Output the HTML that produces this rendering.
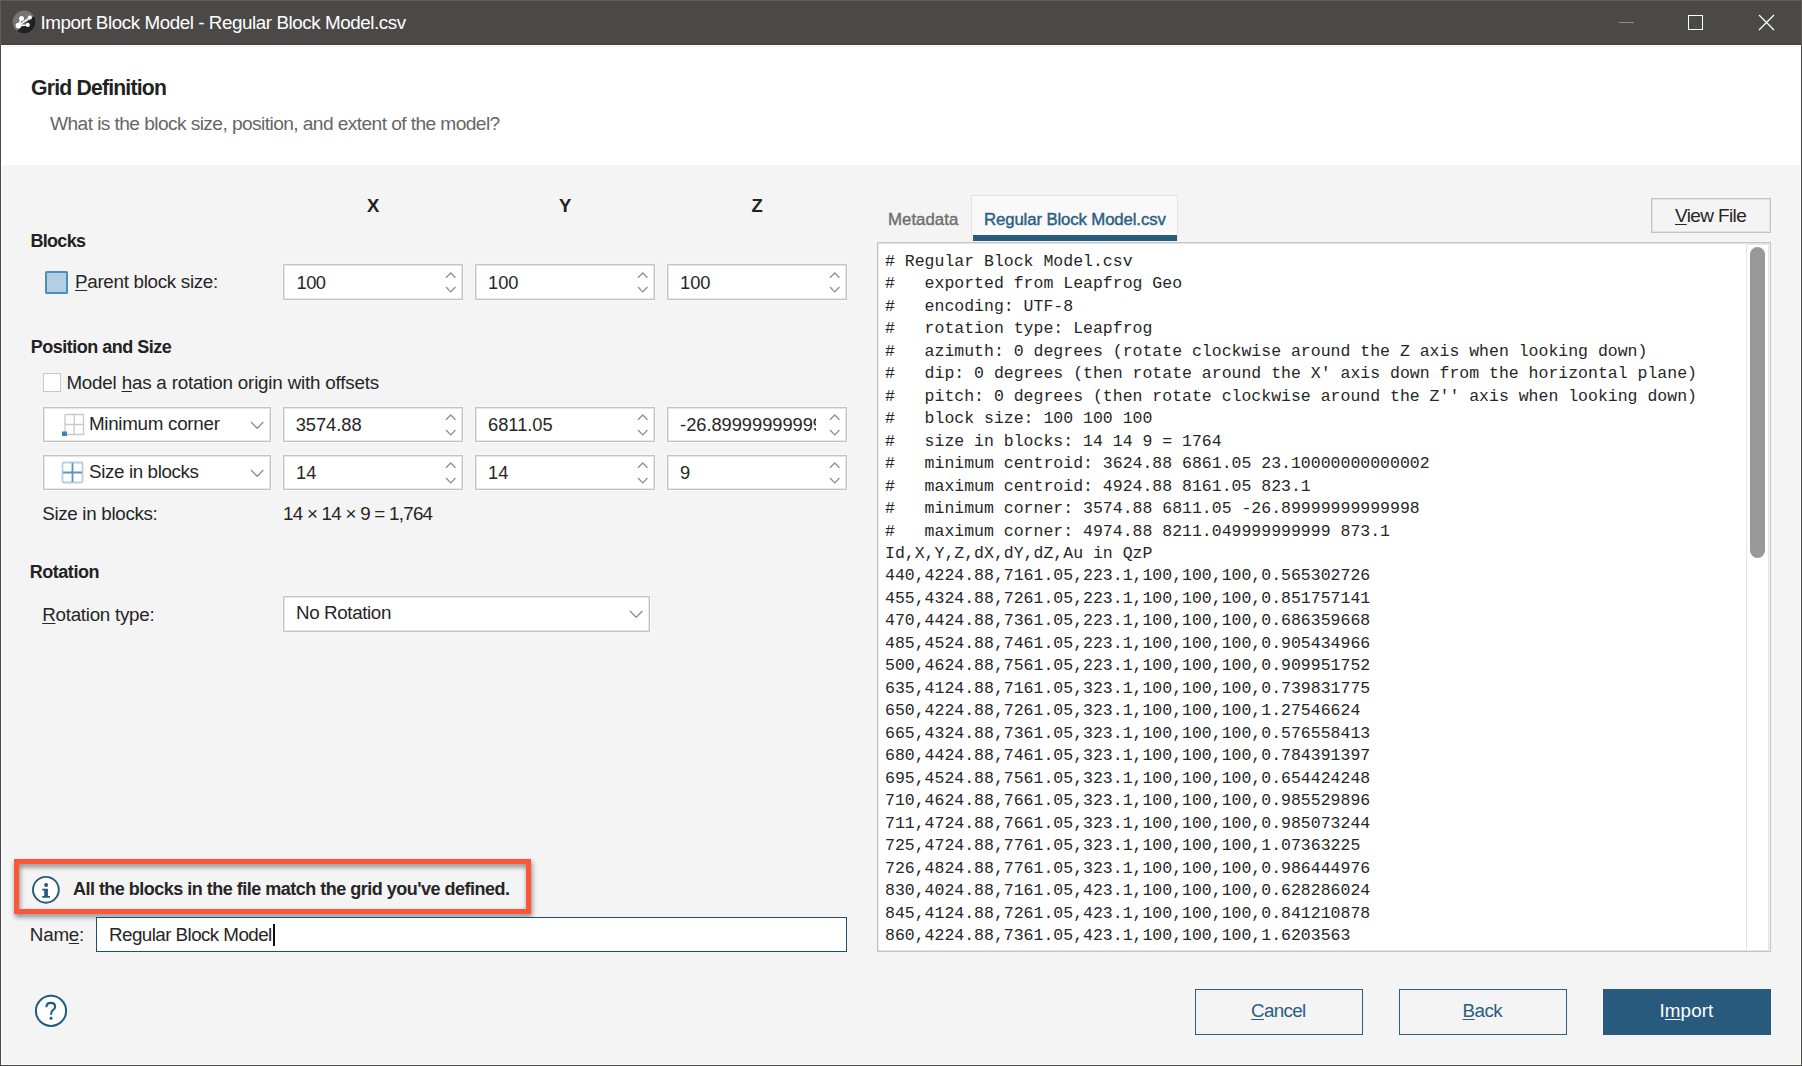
<!DOCTYPE html>
<html><head><meta charset="utf-8"><title>Import Block Model</title><style>*{margin:0;padding:0}
html,body{width:1802px;height:1066px;overflow:hidden;background:#4b4947}
body>div,body>svg{position:absolute}
.t{white-space:pre}
u{text-decoration:underline;text-underline-offset:1.5px;text-decoration-thickness:1px}
</style></head>
<body>
<div style="left:0px;top:0px;width:1802px;height:1066px;background:#4b4947"></div>
<div style="left:0px;top:0px;width:1802px;height:1px;background:#5f5d5b"></div>
<div style="left:0px;top:0px;width:1px;height:45px;background:#5f5d5b"></div>
<div style="left:1801px;top:0px;width:1px;height:45px;background:#5f5d5b"></div>
<svg style="left:12px;top:10px" width="25" height="25" viewBox="0 0 25 25">
<defs><clipPath id="ic"><circle cx="12.1" cy="12.0" r="11.4"/></clipPath></defs>
<circle cx="12.1" cy="12.0" r="11.4" fill="#767474"/>
<path d="M0 26 L6 19.9 L21.3 6.4 L26 1 L26 26 Z" fill="#202125" clip-path="url(#ic)"/>
<line x1="6.45" y1="15.6" x2="17.86" y2="7.58" stroke="#fff" stroke-width="1.5"/>
<line x1="6.45" y1="15.6" x2="9.55" y2="8.4" stroke="#fff" stroke-width="1.5"/>
<line x1="6.45" y1="15.6" x2="15.75" y2="14.9" stroke="#fff" stroke-width="1.5"/>
<circle cx="6.45" cy="15.6" r="2.8" fill="#fff"/>
<circle cx="9.55" cy="8.4" r="2.5" fill="#fff"/>
<circle cx="17.86" cy="7.58" r="2.1" fill="#fff"/>
<circle cx="15.75" cy="14.9" r="2.1" fill="#fff"/>
</svg>
<div id="title" class="t" style="left:40.4px;top:14.18px;font-size:18.8px;line-height:18.8px;color:#ffffff;font-weight:normal;font-family:'Liberation Sans', sans-serif;letter-spacing:-0.428px;">Import Block Model - Regular Block Model.csv</div>
<div style="left:1619px;top:22px;width:15px;height:1px;background:#8f8e8d"></div>
<div style="left:1688px;top:15px;width:15px;height:15px;border:1.4px solid #fff;box-sizing:border-box"></div>
<svg style="left:1758px;top:14px" width="17" height="17"><path d="M1 1 L16 16 M16 1 L1 16" stroke="#fff" stroke-width="1.3"/></svg>
<div style="left:1px;top:45px;width:1800px;height:1020px;background:#ffffff"></div>
<div style="left:1px;top:44px;width:1800px;height:1px;background:#3f3e3c"></div>
<div style="left:2px;top:46px;width:1798px;height:1px;background:#eeeeee"></div>
<div id="hdr" class="t" style="left:31.099999999999998px;top:77.05px;font-size:21.2px;line-height:21.2px;color:#222222;font-weight:bold;font-family:'Liberation Sans', sans-serif;letter-spacing:-0.814px;">Grid Definition</div>
<div id="sub" class="t" style="left:50.0px;top:113.64px;font-size:19.2px;line-height:19.2px;color:#666666;font-weight:normal;font-family:'Liberation Sans', sans-serif;letter-spacing:-0.596px;">What is the block size, position, and extent of the model?</div>
<div style="left:2px;top:165px;width:1798px;height:899px;background:#f4f4f4"></div>
<div id="axX" class="t" style="left:367.0px;top:197.34px;font-size:18.5px;line-height:18.5px;color:#222222;font-weight:bold;font-family:'Liberation Sans', sans-serif;letter-spacing:0.000px;">X</div>
<div id="axY" class="t" style="left:559.0px;top:197.34px;font-size:18.5px;line-height:18.5px;color:#222222;font-weight:bold;font-family:'Liberation Sans', sans-serif;letter-spacing:0.000px;">Y</div>
<div id="axZ" class="t" style="left:751.5px;top:197.34px;font-size:18.5px;line-height:18.5px;color:#222222;font-weight:bold;font-family:'Liberation Sans', sans-serif;letter-spacing:0.000px;">Z</div>
<div id="blocks" class="t" style="left:30.5px;top:231.76px;font-size:18px;line-height:18px;color:#222222;font-weight:bold;font-family:'Liberation Sans', sans-serif;letter-spacing:-0.720px;">Blocks</div>
<div style="left:45px;top:271px;width:23px;height:23px;background:#b2cfe3;border:2px solid #4c8fbf;border-radius:1.5px;box-sizing:border-box"></div>
<div id="pbs" class="t" style="left:75.0px;top:273.08px;font-size:18.8px;line-height:18.8px;color:#262626;font-weight:normal;font-family:'Liberation Sans', sans-serif;letter-spacing:-0.295px;"><u>P</u>arent block size:</div>
<div style="left:283px;top:264px;width:180px;height:36px;background:#fff;border:1px solid #c4c4c4;box-shadow:inset 0 0 0 1px #e6e6e6,0 0 0 1px rgba(255,255,255,0.4);box-sizing:border-box"></div>
<div id="s10" class="t" style="left:296.5px;top:273.51px;font-size:18.3px;line-height:18.3px;color:#262626;font-weight:normal;font-family:'Liberation Sans', sans-serif;letter-spacing:-0.500px;">100</div>
<svg style="left:444.75px;top:271.65px" width="11.5" height="6.7"><path d="M1 5.7 L5.75 1 L10.5 5.7" fill="none" stroke="#8c8c8c" stroke-width="1.3"/></svg>
<svg style="left:444.75px;top:286.15000000000003px" width="11.5" height="6.9"><path d="M1 1 L5.75 5.9 L10.5 1" fill="none" stroke="#8c8c8c" stroke-width="1.3"/></svg>
<div style="left:475px;top:264px;width:180px;height:36px;background:#fff;border:1px solid #c4c4c4;box-shadow:inset 0 0 0 1px #e6e6e6,0 0 0 1px rgba(255,255,255,0.4);box-sizing:border-box"></div>
<div id="t10" class="t" style="left:488.1px;top:273.51px;font-size:18.3px;line-height:18.3px;color:#262626;font-weight:normal;font-family:'Liberation Sans', sans-serif;letter-spacing:0.000px;letter-spacing:-0.033px;">100</div>
<svg style="left:636.75px;top:271.65px" width="11.5" height="6.7"><path d="M1 5.7 L5.75 1 L10.5 5.7" fill="none" stroke="#8c8c8c" stroke-width="1.3"/></svg>
<svg style="left:636.75px;top:286.15000000000003px" width="11.5" height="6.9"><path d="M1 1 L5.75 5.9 L10.5 1" fill="none" stroke="#8c8c8c" stroke-width="1.3"/></svg>
<div style="left:667px;top:264px;width:180px;height:36px;background:#fff;border:1px solid #c4c4c4;box-shadow:inset 0 0 0 1px #e6e6e6,0 0 0 1px rgba(255,255,255,0.4);box-sizing:border-box"></div>
<div id="t11" class="t" style="left:680.1px;top:273.51px;font-size:18.3px;line-height:18.3px;color:#262626;font-weight:normal;font-family:'Liberation Sans', sans-serif;letter-spacing:0.000px;letter-spacing:-0.033px;">100</div>
<svg style="left:828.75px;top:271.65px" width="11.5" height="6.7"><path d="M1 5.7 L5.75 1 L10.5 5.7" fill="none" stroke="#8c8c8c" stroke-width="1.3"/></svg>
<svg style="left:828.75px;top:286.15000000000003px" width="11.5" height="6.9"><path d="M1 1 L5.75 5.9 L10.5 1" fill="none" stroke="#8c8c8c" stroke-width="1.3"/></svg>
<div id="pas" class="t" style="left:30.8px;top:337.76px;font-size:18px;line-height:18px;color:#222222;font-weight:bold;font-family:'Liberation Sans', sans-serif;letter-spacing:-0.500px;">Position and Size</div>
<div style="left:43px;top:373px;width:18px;height:19px;background:#fff;border:1.7px solid #c8c8c8;box-sizing:border-box"></div>
<div id="model" class="t" style="left:66.39999999999999px;top:374.08px;font-size:18.8px;line-height:18.8px;color:#262626;font-weight:normal;font-family:'Liberation Sans', sans-serif;letter-spacing:-0.190px;">Model <u>h</u>as a rotation origin with offsets</div>
<div style="left:43px;top:407px;width:228px;height:35px;background:#fff;border:1px solid #c4c4c4;box-shadow:inset 0 0 0 1px #e6e6e6,0 0 0 1px rgba(255,255,255,0.4);box-sizing:border-box"></div>
<svg style="left:249.8px;top:420.55px" width="14.4" height="8.3"><path d="M1 1 L7.2 7.3 L13.4 1" fill="none" stroke="#8c8c8c" stroke-width="1.3"/></svg>
<svg style="left:61px;top:412px" width="24" height="24" viewBox="0 0 24 24">
<path d="M4 2.5 H22.5 V22.5 H4 M4 12.5 H22.5 M13.2 2.5 V22.5 M4 2.5 V20" fill="none" stroke="#c9c9c9" stroke-width="1.3"/>
<rect x="1" y="19.5" width="5" height="4.5" fill="#3b84bd"/>
</svg>
<div id="mc" class="t" style="left:88.89999999999999px;top:414.58px;font-size:18.8px;line-height:18.8px;color:#262626;font-weight:normal;font-family:'Liberation Sans', sans-serif;letter-spacing:-0.277px;">Minimum corner</div>
<div style="left:283px;top:407px;width:180px;height:35px;background:#fff;border:1px solid #c4c4c4;box-shadow:inset 0 0 0 1px #e6e6e6,0 0 0 1px rgba(255,255,255,0.4);box-sizing:border-box"></div>
<div id="s20" class="t" style="left:295.7px;top:415.51px;font-size:18.3px;line-height:18.3px;color:#262626;font-weight:normal;font-family:'Liberation Sans', sans-serif;letter-spacing:-0.033px;">3574.88</div>
<svg style="left:444.75px;top:414.15px" width="11.5" height="6.7"><path d="M1 5.7 L5.75 1 L10.5 5.7" fill="none" stroke="#8c8c8c" stroke-width="1.3"/></svg>
<svg style="left:444.75px;top:428.65000000000003px" width="11.5" height="6.9"><path d="M1 1 L5.75 5.9 L10.5 1" fill="none" stroke="#8c8c8c" stroke-width="1.3"/></svg>
<div style="left:475px;top:407px;width:180px;height:35px;background:#fff;border:1px solid #c4c4c4;box-shadow:inset 0 0 0 1px #e6e6e6,0 0 0 1px rgba(255,255,255,0.4);box-sizing:border-box"></div>
<div id="t16" class="t" style="left:488.1px;top:415.51px;font-size:18.3px;line-height:18.3px;color:#262626;font-weight:normal;font-family:'Liberation Sans', sans-serif;letter-spacing:0.000px;letter-spacing:-0.033px;">6811.05</div>
<svg style="left:636.75px;top:414.15px" width="11.5" height="6.7"><path d="M1 5.7 L5.75 1 L10.5 5.7" fill="none" stroke="#8c8c8c" stroke-width="1.3"/></svg>
<svg style="left:636.75px;top:428.65000000000003px" width="11.5" height="6.9"><path d="M1 1 L5.75 5.9 L10.5 1" fill="none" stroke="#8c8c8c" stroke-width="1.3"/></svg>
<div style="left:667px;top:407px;width:180px;height:35px;background:#fff;border:1px solid #c4c4c4;box-shadow:inset 0 0 0 1px #e6e6e6,0 0 0 1px rgba(255,255,255,0.4);box-sizing:border-box"></div>
<div id="t17" class="t" style="left:680.1px;top:415.51px;font-size:18.3px;line-height:18.3px;color:#262626;font-weight:normal;font-family:'Liberation Sans', sans-serif;letter-spacing:0.000px;overflow:hidden;width:136.2px;letter-spacing:-0.033px;">-26.89999999999</div>
<svg style="left:828.75px;top:414.15px" width="11.5" height="6.7"><path d="M1 5.7 L5.75 1 L10.5 5.7" fill="none" stroke="#8c8c8c" stroke-width="1.3"/></svg>
<svg style="left:828.75px;top:428.65000000000003px" width="11.5" height="6.9"><path d="M1 1 L5.75 5.9 L10.5 1" fill="none" stroke="#8c8c8c" stroke-width="1.3"/></svg>
<div style="left:43px;top:455px;width:228px;height:35px;background:#fff;border:1px solid #c4c4c4;box-shadow:inset 0 0 0 1px #e6e6e6,0 0 0 1px rgba(255,255,255,0.4);box-sizing:border-box"></div>
<svg style="left:249.8px;top:468.55px" width="14.4" height="8.3"><path d="M1 1 L7.2 7.3 L13.4 1" fill="none" stroke="#8c8c8c" stroke-width="1.3"/></svg>
<svg style="left:61px;top:461px" width="24" height="24" viewBox="0 0 24 24">
<rect x="1.5" y="1.5" width="20" height="20" rx="1.5" fill="none" stroke="#b9cddc" stroke-width="1.8"/>
<path d="M11.5 2 V21 M2 11.5 H21" stroke="#5d95c0" stroke-width="1.8"/>
<path d="M3 3 H20 V20 H3 Z" fill="none" stroke="#5d95c0" stroke-width="0"/>
</svg>
<div id="sib" class="t" style="left:89.1px;top:462.58px;font-size:18.8px;line-height:18.8px;color:#262626;font-weight:normal;font-family:'Liberation Sans', sans-serif;letter-spacing:-0.385px;">Size in blocks</div>
<div style="left:283px;top:455px;width:180px;height:35px;background:#fff;border:1px solid #c4c4c4;box-shadow:inset 0 0 0 1px #e6e6e6,0 0 0 1px rgba(255,255,255,0.4);box-sizing:border-box"></div>
<div id="s30" class="t" style="left:296.1px;top:463.51px;font-size:18.3px;line-height:18.3px;color:#262626;font-weight:normal;font-family:'Liberation Sans', sans-serif;letter-spacing:0.000px;">14</div>
<svg style="left:444.75px;top:462.15px" width="11.5" height="6.7"><path d="M1 5.7 L5.75 1 L10.5 5.7" fill="none" stroke="#8c8c8c" stroke-width="1.3"/></svg>
<svg style="left:444.75px;top:476.65000000000003px" width="11.5" height="6.9"><path d="M1 1 L5.75 5.9 L10.5 1" fill="none" stroke="#8c8c8c" stroke-width="1.3"/></svg>
<div style="left:475px;top:455px;width:180px;height:35px;background:#fff;border:1px solid #c4c4c4;box-shadow:inset 0 0 0 1px #e6e6e6,0 0 0 1px rgba(255,255,255,0.4);box-sizing:border-box"></div>
<div id="t20" class="t" style="left:488.1px;top:463.51px;font-size:18.3px;line-height:18.3px;color:#262626;font-weight:normal;font-family:'Liberation Sans', sans-serif;letter-spacing:0.000px;letter-spacing:-0.033px;">14</div>
<svg style="left:636.75px;top:462.15px" width="11.5" height="6.7"><path d="M1 5.7 L5.75 1 L10.5 5.7" fill="none" stroke="#8c8c8c" stroke-width="1.3"/></svg>
<svg style="left:636.75px;top:476.65000000000003px" width="11.5" height="6.9"><path d="M1 1 L5.75 5.9 L10.5 1" fill="none" stroke="#8c8c8c" stroke-width="1.3"/></svg>
<div style="left:667px;top:455px;width:180px;height:35px;background:#fff;border:1px solid #c4c4c4;box-shadow:inset 0 0 0 1px #e6e6e6,0 0 0 1px rgba(255,255,255,0.4);box-sizing:border-box"></div>
<div id="t21" class="t" style="left:680.1px;top:463.51px;font-size:18.3px;line-height:18.3px;color:#262626;font-weight:normal;font-family:'Liberation Sans', sans-serif;letter-spacing:0.000px;letter-spacing:-0.033px;">9</div>
<svg style="left:828.75px;top:462.15px" width="11.5" height="6.7"><path d="M1 5.7 L5.75 1 L10.5 5.7" fill="none" stroke="#8c8c8c" stroke-width="1.3"/></svg>
<svg style="left:828.75px;top:476.65000000000003px" width="11.5" height="6.9"><path d="M1 1 L5.75 5.9 L10.5 1" fill="none" stroke="#8c8c8c" stroke-width="1.3"/></svg>
<div id="sibl" class="t" style="left:42.199999999999996px;top:505.28px;font-size:18.8px;line-height:18.8px;color:#262626;font-weight:normal;font-family:'Liberation Sans', sans-serif;letter-spacing:-0.314px;">Size in blocks:</div>
<div id="calc" class="t" style="left:283.0px;top:505.08px;font-size:18.8px;line-height:18.8px;color:#262626;font-weight:normal;font-family:'Liberation Sans', sans-serif;letter-spacing:-0.744px;">14 × 14 × 9 = 1,764</div>
<div id="rot" class="t" style="left:29.7px;top:562.96px;font-size:18px;line-height:18px;color:#222222;font-weight:bold;font-family:'Liberation Sans', sans-serif;letter-spacing:-0.457px;">Rotation</div>
<div id="rtype" class="t" style="left:42.199999999999996px;top:606.08px;font-size:18.8px;line-height:18.8px;color:#262626;font-weight:normal;font-family:'Liberation Sans', sans-serif;letter-spacing:-0.262px;"><u>R</u>otation type:</div>
<div style="left:283px;top:596px;width:367px;height:36px;background:#fff;border:1px solid #c4c4c4;box-shadow:inset 0 0 0 1px #e6e6e6,0 0 0 1px rgba(255,255,255,0.4);box-sizing:border-box"></div>
<div id="norot" class="t" style="left:296.0px;top:604.48px;font-size:18.8px;line-height:18.8px;color:#262626;font-weight:normal;font-family:'Liberation Sans', sans-serif;letter-spacing:-0.380px;">No Rotation</div>
<svg style="left:628.8px;top:610.15px" width="14.4" height="8.3"><path d="M1 1 L7.2 7.3 L13.4 1" fill="none" stroke="#8c8c8c" stroke-width="1.3"/></svg>
<div style="left:14px;top:859px;width:517px;height:55px;border:5px solid #fb553a;box-sizing:border-box;filter:drop-shadow(1px 3px 2.5px rgba(0,0,0,0.45))"></div>
<svg style="left:30px;top:874px" width="32" height="32" viewBox="0 0 32 32">
<circle cx="15.9" cy="15.8" r="12.9" fill="#ffffff" stroke="#24597c" stroke-width="1.9"/>
<circle cx="16.1" cy="11.0" r="2.0" fill="#24597c"/>
<path d="M12.2 14.7 H17.9 V22 H20 V23.8 H12.2 V22 H14.2 V16.4 H12.2 Z" fill="#24597c"/>
</svg>
<div id="info" class="t" style="left:72.89999999999999px;top:879.76px;font-size:18px;line-height:18px;color:#262626;font-weight:bold;font-family:'Liberation Sans', sans-serif;letter-spacing:-0.504px;">All the blocks in the file match the grid you've defined.</div>
<div id="name" class="t" style="left:29.8px;top:926.08px;font-size:18.8px;line-height:18.8px;color:#262626;font-weight:normal;font-family:'Liberation Sans', sans-serif;letter-spacing:-0.200px;">Nam<u>e</u>:</div>
<div style="left:96px;top:917px;width:751px;height:35px;background:#fff;border:1.6px solid #1f4e6d;box-sizing:border-box"></div>
<div id="nameval" class="t" style="left:109.0px;top:926.08px;font-size:18.8px;line-height:18.8px;color:#262626;font-weight:normal;font-family:'Liberation Sans', sans-serif;letter-spacing:-0.556px;">Regular Block Model</div>
<div style="left:272.8px;top:924px;width:2.5px;height:21.5px;background:#111"></div>
<svg style="left:33px;top:993px" width="36" height="36" viewBox="0 0 36 36">
<circle cx="18" cy="17.9" r="15.1" fill="#ffffff" stroke="#215b81" stroke-width="2"/>
<path d="M13.4 14.3 Q13.4 9.9 17.8 9.9 Q22.1 9.9 22.1 13.7 Q22.1 15.8 19.9 17.2 Q18 18.4 18 21.8" fill="none" stroke="#215b81" stroke-width="2.1"/>
<circle cx="18" cy="25.3" r="1.5" fill="#215b81"/>
</svg>
<div id="meta" class="t" style="left:888.0px;top:211.58px;font-size:16.8px;line-height:16.8px;color:#6f6f6f;font-weight:normal;font-family:'Liberation Sans', sans-serif;letter-spacing:0.043px;-webkit-text-stroke:0.4px #6f6f6f;">Metadata</div>
<div style="left:971.3px;top:195px;width:207.0px;height:46px;background:#f9f9f9;border:1.5px solid #e3e3e3;border-bottom:none;box-sizing:border-box"></div>
<div style="left:973px;top:235.4px;width:204px;height:5.599999999999994px;background:#285b7d"></div>
<div id="tab" class="t" style="left:984.0px;top:211.58px;font-size:16.8px;line-height:16.8px;color:#2a5e84;font-weight:normal;font-family:'Liberation Sans', sans-serif;letter-spacing:-0.131px;-webkit-text-stroke:0.4px #2a5e84;">Regular Block Model.csv</div>
<div style="left:1651px;top:198px;width:120px;height:35px;background:#f4f4f4;border:1px solid #c4c4c4;box-shadow:inset 0 0 0 1px #e2e2e2;box-sizing:border-box"></div>
<div id="vf" class="t" style="left:1675.0px;top:206.31px;font-size:19px;line-height:19px;color:#262626;font-weight:normal;font-family:'Liberation Sans', sans-serif;letter-spacing:-0.625px;"><u>V</u>iew File</div>
<div style="left:877px;top:242px;width:894px;height:710px;background:#fff;border:1px solid #c4c4c4;box-shadow:inset 0 0 0 1px #e4e4e4;box-sizing:border-box"></div>
<div id="mono" class="t" style="left:885px;top:250.71px;font-family:'Liberation Mono', monospace;font-size:16.5px;line-height:22.49px;color:#262626"># Regular Block Model.csv
#   exported from Leapfrog Geo
#   encoding: UTF-8
#   rotation type: Leapfrog
#   azimuth: 0 degrees (rotate clockwise around the Z axis when looking down)
#   dip: 0 degrees (then rotate around the X&#x27; axis down from the horizontal plane)
#   pitch: 0 degrees (then rotate clockwise around the Z&#x27;&#x27; axis when looking down)
#   block size: 100 100 100
#   size in blocks: 14 14 9 = 1764
#   minimum centroid: 3624.88 6861.05 23.10000000000002
#   maximum centroid: 4924.88 8161.05 823.1
#   minimum corner: 3574.88 6811.05 -26.89999999999998
#   maximum corner: 4974.88 8211.049999999999 873.1
Id,X,Y,Z,dX,dY,dZ,Au in QzP
440,4224.88,7161.05,223.1,100,100,100,0.565302726
455,4324.88,7261.05,223.1,100,100,100,0.851757141
470,4424.88,7361.05,223.1,100,100,100,0.686359668
485,4524.88,7461.05,223.1,100,100,100,0.905434966
500,4624.88,7561.05,223.1,100,100,100,0.909951752
635,4124.88,7161.05,323.1,100,100,100,0.739831775
650,4224.88,7261.05,323.1,100,100,100,1.27546624
665,4324.88,7361.05,323.1,100,100,100,0.576558413
680,4424.88,7461.05,323.1,100,100,100,0.784391397
695,4524.88,7561.05,323.1,100,100,100,0.654424248
710,4624.88,7661.05,323.1,100,100,100,0.985529896
711,4724.88,7661.05,323.1,100,100,100,0.985073244
725,4724.88,7761.05,323.1,100,100,100,1.07363225
726,4824.88,7761.05,323.1,100,100,100,0.986444976
830,4024.88,7161.05,423.1,100,100,100,0.628286024
845,4124.88,7261.05,423.1,100,100,100,0.841210878
860,4224.88,7361.05,423.1,100,100,100,1.6203563</div>
<div style="left:1769px;top:243.5px;width:0.7000000000000455px;height:707.0px;background:#f2f2f2"></div>
<div style="left:1746px;top:243.5px;width:23px;height:707.3px;border:1px solid #e4e4e4;border-top:1.5px solid #e6e6e6;border-bottom:1.3px solid #e6e6e6;box-sizing:border-box"></div>
<div style="left:1750px;top:247px;width:15px;height:311px;background:#989898;border-radius:7.5px"></div>
<div style="left:1195px;top:989px;width:168px;height:46px;background:#f4f4f4;border:1.7px solid #2b5e81;box-sizing:border-box"></div>
<div style="left:1399px;top:989px;width:168px;height:46px;background:#f4f4f4;border:1.7px solid #2b5e81;box-sizing:border-box"></div>
<div style="left:1603px;top:989px;width:168px;height:46px;background:#285a7d"></div>
<div id="cancel" class="t" style="left:1251.0px;top:1001.78px;font-size:18.8px;line-height:18.8px;color:#2b5e81;font-weight:normal;font-family:'Liberation Sans', sans-serif;letter-spacing:-0.640px;"><u>C</u>ancel</div>
<div id="back" class="t" style="left:1462.6000000000001px;top:1001.78px;font-size:18.8px;line-height:18.8px;color:#2b5e81;font-weight:normal;font-family:'Liberation Sans', sans-serif;letter-spacing:-0.533px;"><u>B</u>ack</div>
<div id="import" class="t" style="left:1659.5px;top:1001.78px;font-size:18.8px;line-height:18.8px;color:#ffffff;font-weight:normal;font-family:'Liberation Sans', sans-serif;letter-spacing:0.120px;">I<u>m</u>port</div>
</body></html>
